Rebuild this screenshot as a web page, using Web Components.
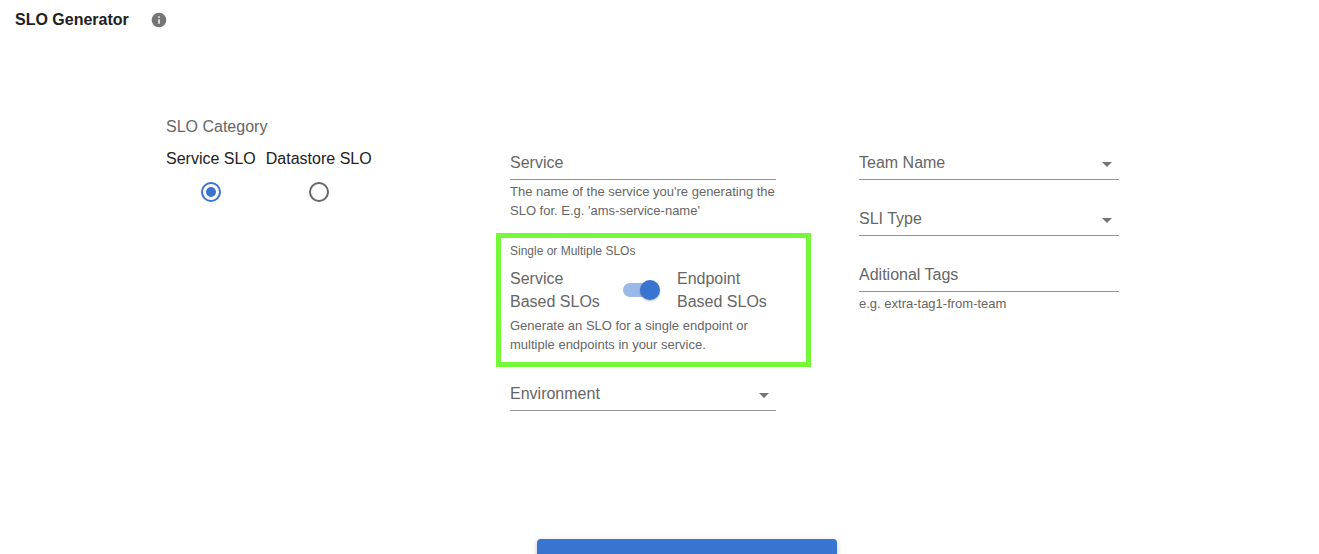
<!DOCTYPE html>
<html lang="en">
<head>
<meta charset="utf-8">
<meta name="viewport" content="width=device-width, initial-scale=1">
<title>SLO Generator</title>
<style>
  :root {
    --text: #212121;
    --muted: #666;
    --line: #949494;
    --primary: #3874d0;
    --primary-soft: #9bb9e7;
    --highlight: #75f837;
  }
  html { scrollbar-width: none; }
  body {
    margin: 0;
    background: #fff;
    color: var(--text);
    font: 16px/24px "Liberation Sans", Arial, sans-serif;
  }
</style>
</head>
<body>
<slo-generator></slo-generator>

<script>
const define = (name, html, setup) => {
  const template = document.createElement('template');
  template.innerHTML = html;
  customElements.define(name, class extends HTMLElement {
    constructor() {
      super();
      this.attachShadow({ mode: 'open' }).append(template.content.cloneNode(true));
    }
    connectedCallback() {
      if (setup) setup(this, this.shadowRoot);
    }
  });
};

define('page-header', `
  <style>
    :host { display: flex; align-items: center; gap: 22px; padding: 8px 15px; }
    h1 { margin: 0; font-size: 16px; line-height: 24px; font-weight: 700; }
    button { display: flex; margin: 0; padding: 0; border: 0; background: none; }
    svg { width: 16px; height: 16px; fill: #757575; }
  </style>
  <h1><slot></slot></h1>
  <button type="button" aria-label="About the SLO generator">
    <svg viewBox="1 1 22 22"><path d="M12 2C6.48 2 2 6.48 2 12s4.48 10 10 10 10-4.48 10-10S17.52 2 12 2zm1 15h-2v-6h2v6zm0-8h-2V7h2v2z"/></svg>
  </button>
`);

define('radio-option', `
  <style>
    :host { display: block; }
    label { display: flex; flex-direction: column; align-items: center; gap: 11px; }
    input {
      appearance: none; box-sizing: border-box; width: 20px; height: 20px; margin: 0;
      border: 2px solid var(--muted); border-radius: 50%;
      display: grid; place-items: center;
    }
    input:checked { border-color: var(--primary); }
    input:checked::before {
      content: ""; width: 10px; height: 10px; border-radius: 50%; background: var(--primary);
    }
  </style>
  <label><span><slot></slot></span><input type="radio" name="category"></label>
`, (host, root) => {
  const input = root.querySelector('input');
  input.checked = host.hasAttribute('checked');
  input.addEventListener('change', () => {
    for (const other of host.parentElement.querySelectorAll('radio-option')) {
      if (other !== host) other.shadowRoot.querySelector('input').checked = false;
    }
  });
});

define('radio-set', `
  <style>
    :host { display: block; }
    fieldset { margin: 0; padding: 0; border: 0; min-width: 0; }
    legend { padding: 0; margin-bottom: 8px; color: var(--muted); }
    div { display: flex; gap: 10px; white-space: nowrap; }
  </style>
  <fieldset>
    <legend><slot name="legend"></slot></legend>
    <div><slot></slot></div>
  </fieldset>
`);

const fieldStyles = `
  :host { display: block; }
  .field { display: grid; }
  .field > * { grid-area: 1 / 1; }
  label { color: var(--muted); line-height: 30px; justify-self: start; align-self: start; pointer-events: none; z-index: 1; }
  input, select {
    appearance: none; box-sizing: border-box; width: 100%; height: 32px;
    margin: 0; padding: 0; border: 0; border-bottom: 1px solid var(--line);
    border-radius: 0; background: none; color: var(--text); font: inherit; outline: none;
  }
  .help { color: var(--muted); font-size: 13px; line-height: 19px; margin: 2px 0 0; padding-bottom: 1px; }
`;

define('text-field', `
  <style>${fieldStyles}
    input:not(:placeholder-shown) { background: #fff; z-index: 2; }
  </style>
  <div class="field">
    <label for="control"><slot></slot></label>
    <input id="control" type="text" placeholder=" " aria-describedby="help">
  </div>
  <p class="help" id="help"><slot name="help"></slot></p>
`);

define('select-field', `
  <style>${fieldStyles}
    svg { width: 24px; height: 24px; margin-top: 4px; justify-self: end; fill: #757575; pointer-events: none; }
  </style>
  <div class="field">
    <label for="control"><slot></slot></label>
    <select id="control"><option value=""></option></select>
    <svg viewBox="0 0 24 24" aria-hidden="true"><path d="M7 10l5 5 5-5z"/></svg>
  </div>
`);

define('switch-field', `
  <style>
    :host { display: block; color: var(--muted); border: 5px solid var(--highlight); padding: 4px 9px 8px; }
    fieldset { margin: 0; padding: 0; border: 0; min-width: 0; }
    legend { padding: 0; margin-bottom: 6px; font-size: 12px; line-height: 19px; }
    label { display: grid; grid-template-columns: 93px 37px 96px; column-gap: 20px; align-items: center; line-height: 23px; }
    label > :last-child { margin-left: -3px; }
    input {
      appearance: none; width: 37px; height: 20px; margin: 0;
      display: grid; align-items: center;
    }
    input::before, input::after { content: ""; grid-area: 1 / 1; }
    input::before { width: 34px; height: 14px; border-radius: 7px; background: #9e9e9e; }
    input::after {
      width: 20px; height: 20px; border-radius: 50%; background: #fafafa;
      box-shadow: 0 1px 2px rgba(0, 0, 0, .3);
    }
    input:checked::before { background: var(--primary-soft); }
    input:checked::after { background: var(--primary); justify-self: end; }
    .help { font-size: 13px; line-height: 19px; margin: 3px 35px 0 0; }
  </style>
  <fieldset>
    <legend><slot name="legend"></slot></legend>
    <label>
      <span><slot name="off"></slot></span>
      <input type="checkbox" role="switch" checked>
      <span><slot name="on"></slot></span>
    </label>
    <p class="help"><slot name="help"></slot></p>
  </fieldset>
`);

define('action-button', `
  <style>
    :host { display: block; }
    button {
      display: block; width: 100%; margin: 0; padding: 8px 22px; border: 0; border-radius: 4px;
      background: var(--primary); color: #fff; text-transform: uppercase;
      font: 500 16px/28px "Liberation Sans", Arial, sans-serif;
      box-shadow: 0 2px 5px rgba(0, 0, 0, .25);
    }
  </style>
  <button type="button"><slot></slot></button>
`);

define('slo-generator', `
  <style>
    :host { display: block; }
    form {
      display: grid; grid-template-columns: 282fr 315fr 260fr; column-gap: 48px;
      align-items: start; padding: 75px 200px 0 166px;
    }
    .column { display: grid; grid-template-columns: minmax(0, 1fr); padding-top: 33px; }
    .target { gap: 12px; }
    .target > text-field, .target > select-field { margin: 0 35px 0 14px; }
    .details { gap: 24px; }
    footer { display: flex; justify-content: center; padding: 128px 0 24px 55px; }
    action-button { width: 300px; }
  </style>
  <page-header>SLO Generator</page-header>
  <main>
    <form>
      <radio-set>
        <span slot="legend">SLO Category</span>
        <radio-option checked>Service SLO</radio-option>
        <radio-option>Datastore SLO</radio-option>
      </radio-set>
      <div class="column target">
        <text-field>Service<span slot="help">The name of the service you're generating the SLO for. E.g. 'ams-service-name'</span></text-field>
        <switch-field>
          <span slot="legend">Single or Multiple SLOs</span>
          <span slot="off">Service Based SLOs</span>
          <span slot="on">Endpoint Based SLOs</span>
          <span slot="help">Generate an SLO for a single endpoint or multiple endpoints in your service.</span>
        </switch-field>
        <select-field>Environment</select-field>
      </div>
      <div class="column details">
        <select-field>Team Name</select-field>
        <select-field>SLI Type</select-field>
        <text-field>Aditional Tags<span slot="help">e.g. extra-tag1-from-team</span></text-field>
      </div>
    </form>
  </main>
  <footer><action-button>Generate SLO</action-button></footer>
`);
</script>
</body>
</html>
